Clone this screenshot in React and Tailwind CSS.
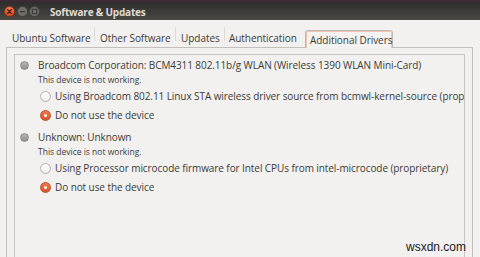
import React from "react";

const font = { fontFamily: '"Open Sans", "Noto Sans", sans-serif' };

function DeviceRadio() {
  return (
    <span className="block w-[9px] h-[9px] rounded-full border border-[#8e8c88] bg-gradient-to-b from-[#b9b7b3] to-[#8f8d89] shrink-0" />
  );
}

function OptionRadio({ checked }) {
  if (checked) {
    return (
      <span className="flex items-center justify-center w-[11px] h-[11px] rounded-full border border-[#b9502c] bg-gradient-to-b from-[#f0784a] to-[#d9532a] shrink-0">
        <span className="block w-[3px] h-[3px] rounded-full bg-white" />
      </span>
    );
  }
  return (
    <span className="block w-[11px] h-[11px] rounded-full border border-[#b3b1ad] bg-gradient-to-b from-white to-[#efeeec] shrink-0" />
  );
}

function Tab({ children, w, pl }) {
  return (
    <div className={`flex items-center h-[17px] ${w} ${pl} text-[10px] tracking-[-0.05px] text-[#3c3b37] whitespace-nowrap`}>
      {children}
    </div>
  );
}

function Sep() {
  return <div className="w-px h-[14px] bg-[#dcdad6] self-center" />;
}

const row = "flex items-center h-[14px] text-[10px] tracking-[-0.08px] whitespace-nowrap";

export default function App() {
  return (
    <div className="relative w-[480px] h-[257px] overflow-hidden bg-[#f2f1f0]" style={font}>
      {/* Title bar */}
      <div className="h-[20px] bg-gradient-to-b from-[#2f2d2b] to-[#4a4945] border-t-2 border-[#3c2a36] flex items-center">
        <div className="flex items-center pl-[4px] gap-[1.5px]">
          <svg width="11" height="11" viewBox="0 0 11 11">
            <defs>
              <linearGradient id="cg" x1="0" y1="0" x2="0" y2="1">
                <stop offset="0" stopColor="#f37a4a" />
                <stop offset="1" stopColor="#d4441c" />
              </linearGradient>
            </defs>
            <circle cx="5.5" cy="5.5" r="5" fill="url(#cg)" stroke="#7a2e12" strokeWidth="0.6" />
            <path d="M3.6 3.6 L7.4 7.4 M7.4 3.6 L3.6 7.4" stroke="#3b1b0d" strokeWidth="1.3" strokeLinecap="round" />
          </svg>
          <svg width="11" height="11" viewBox="0 0 11 11">
            <circle cx="5.5" cy="5.5" r="5" fill="#6f6e6a" stroke="#3a3936" strokeWidth="0.6" />
            <rect x="3" y="5" width="5" height="1.3" fill="#3a3936" />
          </svg>
          <svg width="11" height="11" viewBox="0 0 11 11">
            <circle cx="5.5" cy="5.5" r="5" fill="#6f6e6a" stroke="#3a3936" strokeWidth="0.6" />
            <rect x="3.3" y="3.3" width="4.4" height="4.4" fill="none" stroke="#3a3936" strokeWidth="1.1" />
          </svg>
        </div>
        <div className="ml-[10px] text-[10px] font-bold tracking-[-0.2px] text-[#dfdbd2] leading-none pt-[1px]">
          Software &amp; Updates
        </div>
      </div>

      {/* Tabs */}
      <div className="flex items-end h-[27px] pl-[6px]">
        <Tab w="w-[88px]" pl="pl-[6px]">Ubuntu Software</Tab>
        <Sep />
        <Tab w="w-[80px]" pl="pl-[5px]">Other Software</Tab>
        <Sep />
        <Tab w="w-[48px]" pl="pl-[5px]">Updates</Tab>
        <Sep />
        <Tab w="w-[78px]" pl="pl-[4px]">Authentication</Tab>
        <div className="w-[2px]" />
        <div className="relative z-10 -mb-px flex items-center h-[18px] w-[88px] rounded-t-[3px] border border-b-0 border-[#bdbab5] bg-[#f4f3f2]">
          <div className="flex items-center h-full w-full pl-[3px] rounded-t-[2px] border border-b-0 border-[#f2c3b0] text-[10px] tracking-[-0.05px] text-[#3c3b37] whitespace-nowrap">
            Additional Drivers
          </div>
        </div>
      </div>

      {/* Notebook */}
      <div className="ml-[6px] mr-[7px] h-[220px] border border-b-0 border-[#c2c0bb] px-[7px] pt-[6px]">
        <div className="h-full overflow-hidden border border-b-0 border-[#c9c7c3] pt-[3px] text-[#3c3b37]">
          <div className={`${row} pl-[5px] gap-[9px]`}>
            <DeviceRadio />
            <span>Broadcom Corporation: BCM4311 802.11b/g WLAN (Wireless 1390 WLAN Mini-Card)</span>
          </div>
          <div className="flex items-center h-[14px] mt-[1px] pl-[23px] text-[8.5px] whitespace-nowrap">
            This device is not working.
          </div>
          <div className={`${row} mt-[2px] pl-[25px] gap-[4px]`}>
            <OptionRadio />
            <span>Using Broadcom 802.11 Linux STA wireless driver source from bcmwl-kernel-source (proprietary)</span>
          </div>
          <div className={`${row} mt-[5px] pl-[25px] gap-[4px]`}>
            <OptionRadio checked />
            <span>Do not use the device</span>
          </div>
          <div className={`${row} mt-[8px] pl-[5px] gap-[9px]`}>
            <DeviceRadio />
            <span>Unknown: Unknown</span>
          </div>
          <div className="flex items-center h-[14px] mt-[1px] pl-[23px] text-[8.5px] whitespace-nowrap">
            This device is not working.
          </div>
          <div className={`${row} mt-[2px] pl-[25px] gap-[4px]`}>
            <OptionRadio />
            <span>Using Processor microcode firmware for Intel CPUs from intel-microcode (proprietary)</span>
          </div>
          <div className={`${row} mt-[5px] pl-[25px] gap-[4px]`}>
            <OptionRadio checked />
            <span>Do not use the device</span>
          </div>
        </div>
      </div>

      {/* watermark */}
      <div
        className="absolute left-[406px] top-[241px] text-[12px] text-[#1a1a1a] leading-none"
        style={{ fontFamily: '"Liberation Sans", Arial, sans-serif' }}
      >
        wsxdn.com
      </div>
    </div>
  );
}
